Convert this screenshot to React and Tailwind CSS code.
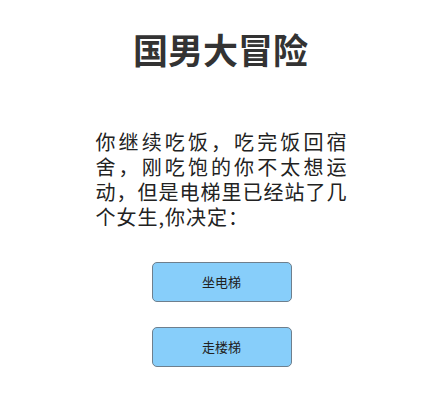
import React from 'react';

const choices = ['坐电梯', '走楼梯'];

const App = () => {
  return (
    <div className="min-h-screen bg-white text-[#222] pt-[29px]" style={{ fontFamily: '"Noto Sans CJK SC", "Noto Sans", sans-serif' }}>
      <h1 className="text-center text-[35px] leading-[40px] font-bold text-[#333]">国男大冒险</h1>

      <p className="mx-auto mt-[60px] w-[254px] text-[20px] leading-[25px] tracking-[1px] text-justify pl-[2px]">
        你继续吃饭，吃完饭回宿舍，刚吃饱的你不太想运动，但是电梯里已经站了几个女生,你决定：
      </p>

      <div className="mt-[33px] flex flex-col items-center gap-[25px] pl-[2px]">
        {choices.map((c) => (
          <button
            key={c}
            className="w-[140px] h-[40px] rounded-[5px] border border-[#6e7f8d] bg-[#87cefa] text-[13px] text-[#222]"
          >
            {c}
          </button>
        ))}
      </div>
    </div>
  );
};

export default App;
